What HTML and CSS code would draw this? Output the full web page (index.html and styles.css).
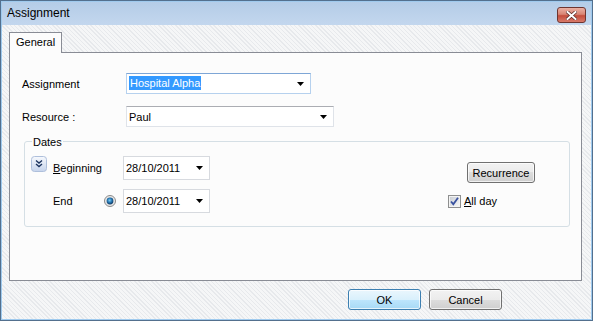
FILE: index.html
```html
<!DOCTYPE html>
<html lang="en">
<head>
<meta charset="UTF-8">
<title>Assignment</title>
<link rel="stylesheet" href="styles.css">
</head>
<body>
  <div class="window">
    <div class="frame">
      <div class="titlebar">
        <span class="title">Assignment</span>
        <span class="close">
          <svg width="11" height="9" viewBox="0 0 11 9">
            <path d="M1.5 1 L9.5 8 M9.5 1 L1.5 8" stroke="#5a2a26" stroke-width="3.4" stroke-linecap="square"/>
            <path d="M1.5 1 L9.5 8 M9.5 1 L1.5 8" stroke="#fff" stroke-width="2" stroke-linecap="square"/>
          </svg>
        </span>
      </div>

      <div class="client">
        <div class="tabs">
          <div class="tab">General</div>
        </div>

        <div class="panel">
          <div class="field-row">
            <span class="label">Assignment</span>
            <div class="combo combo-assign focus">
              <span class="value"><span class="sel">Hospital Alpha</span></span>
              <svg class="arrow" width="7" height="4" viewBox="0 0 7 4"><polygon points="0,0 7,0 3.5,4" fill="#000"/></svg>
            </div>
          </div>
          <div class="field-row">
            <span class="label">Resource :</span>
            <div class="combo combo-resource">
              <span class="value">Paul</span>
              <svg class="arrow" width="7" height="4" viewBox="0 0 7 4"><polygon points="0,0 7,0 3.5,4" fill="#000"/></svg>
            </div>
          </div>

          <div class="group">
            <span class="group-title">Dates</span>
            <div class="group-grid">
              <span class="expand">
                <svg width="16" height="16" viewBox="0 0 16 16">
                  <defs>
                    <linearGradient id="eg" x1="0" y1="0" x2="0" y2="1">
                      <stop offset="0" stop-color="#f7f9fd"/>
                      <stop offset="1" stop-color="#c6d4ec"/>
                    </linearGradient>
                  </defs>
                  <rect x="0.5" y="0.5" width="15" height="15" rx="3" fill="url(#eg)" stroke="#aebfdb"/>
                  <path d="M5 4.5 L8 7 L11 4.5 M5 8 L8 10.5 L11 8" fill="none" stroke="#1d3560" stroke-width="1.4"/>
                </svg>
              </span>
              <span class="glabel row1"><u>B</u>eginning</span>
              <div class="combo date row1">
                <span class="value">28/10/2011</span>
                <svg class="arrow" width="7" height="4" viewBox="0 0 7 4"><polygon points="0,0 7,0 3.5,4" fill="#000"/></svg>
              </div>
              <button class="btn recurrence">Recurrence</button>

              <span class="glabel row2">End</span>
              <span class="radio">
                <svg width="12" height="12" viewBox="0 0 12 12">
                  <defs>
                    <radialGradient id="rg" cx="0.45" cy="0.4" r="0.6">
                      <stop offset="0" stop-color="#7fd0f5"/>
                      <stop offset="0.5" stop-color="#2a7bb6"/>
                      <stop offset="1" stop-color="#0e3660"/>
                    </radialGradient>
                  </defs>
                  <circle cx="6" cy="6" r="5.5" fill="#e8e8e8" stroke="#8a8a8a"/>
                  <circle cx="6" cy="6" r="3.4" fill="url(#rg)"/>
                </svg>
              </span>
              <div class="combo date row2">
                <span class="value">28/10/2011</span>
                <svg class="arrow" width="7" height="4" viewBox="0 0 7 4"><polygon points="0,0 7,0 3.5,4" fill="#000"/></svg>
              </div>
              <label class="allday">
                <svg width="13" height="13" viewBox="0 0 13 13">
                  <defs>
                    <linearGradient id="cg" x1="0" y1="0" x2="1" y2="1">
                      <stop offset="0" stop-color="#cbcfd5"/>
                      <stop offset="1" stop-color="#f6f6f6"/>
                    </linearGradient>
                  </defs>
                  <rect x="0.5" y="0.5" width="12" height="12" fill="#f4f4f4" stroke="#8e8f8f"/>
                  <rect x="2" y="2" width="9" height="9" fill="url(#cg)"/>
                  <path d="M3 6.5 L5.3 9.2 L10 2.8" fill="none" stroke="#3a52a0" stroke-width="1.8"/>
                </svg>
                <span><u>A</u>ll day</span>
              </label>
            </div>
          </div>
        </div>

        <div class="buttons">
          <button class="btn default">OK</button>
          <button class="btn">Cancel</button>
        </div>
      </div>
    </div>
  </div>
</body>
</html>
```

FILE: styles.css
```css
* {
  box-sizing: border-box;
}

body {
  margin: 0;
  font-family: "Liberation Sans", Arial, sans-serif;
  font-size: 11px;
  color: #000;
}

.window {
  width: 593px;
  height: 321px;
  border: 1px solid #53708e;
}

.frame {
  height: 100%;
  border: 1px solid #9fcaee;
  display: flex;
  flex-direction: column;
  background: repeating-linear-gradient(45deg, #e7e9ec 0 1px, #f5f6f7 1px 3px);
}

/* title bar */
.titlebar {
  height: 23px;
  display: flex;
  background: linear-gradient(#b4cce7, #c3d7ee);
}

.title {
  font-size: 12px;
  line-height: 23px;
  padding-left: 5px;
}

.close {
  margin: 5px 5px 0 auto;
  width: 29px;
  height: 16px;
  border: 1px solid #6e3530;
  border-radius: 3px;
  display: flex;
  align-items: center;
  justify-content: center;
  background: linear-gradient(#eab0a3 0%, #d98574 45%, #c44d3c 55%, #d87a6a 100%);
}

/* client area */
.client {
  flex: 1;
  padding: 7px 9px 0 7px;
}

.tabs {
  display: flex;
}

.tab {
  position: relative;
  z-index: 1;
  height: 21px;
  margin-bottom: -1px;
  padding: 0 6px;
  line-height: 19px;
  border: 1px solid #898c95;
  border-bottom: none;
  background: #fcfcfc;
}

.panel {
  height: 229px;
  border: 1px solid #898c95;
  background: #fcfcfc;
  padding: 20px 11px 0 12px;
}

.field-row {
  display: flex;
  align-items: center;
  height: 21px;
}

.field-row + .field-row {
  margin-top: 12px;
}

.label {
  width: 104px;
}

.combo {
  height: 21px;
  display: flex;
  align-items: center;
  padding: 0 6px 0 2px;
  background: #fff;
  border: 1px solid #dfe3e9;
  border-top-color: #abadb3;
}

.combo.focus {
  border-color: #b6d1ee;
  border-top-color: #7ea6d6;
}

.combo .value {
  flex: 1;
  white-space: nowrap;
}

.combo-assign {
  width: 185px;
}

.combo-resource {
  width: 208px;
}

.sel {
  background: #3399ff;
  color: #fff;
  padding: 1px 1px;
  line-height: 13px;
}

/* dates group */
.group {
  width: 546px;
  margin: 14px 0 0 2px;
  padding-bottom: 13px;
  border: 1px solid #d5dfe5;
  border-radius: 3px;
}

.group-title {
  display: table;
  margin: -6px 0 0 7px;
  padding: 0 1px;
  line-height: 13px;
  background: #fcfcfc;
}

.group-grid {
  display: grid;
  grid-template-columns: 28px 51px 19px 87px 1fr;
  grid-template-rows: 24px 24px;
  row-gap: 9px;
  margin-top: 7px;
}

.expand {
  grid-column: 1;
  grid-row: 1;
  margin-left: 6px;
  width: 16px;
  height: 16px;
  display: flex;
}

.glabel {
  grid-column: 2;
  align-self: center;
}

.row1 {
  grid-row: 1;
}

.row2 {
  grid-row: 2;
}

.radio {
  grid-column: 3;
  grid-row: 2;
  align-self: center;
  display: flex;
}

.date {
  grid-column: 4;
  height: 24px;
  width: 87px;
  border-color: #d7dadf;
}

.allday {
  grid-column: 5;
  grid-row: 2;
  align-self: center;
  justify-self: start;
  margin-left: 238px;
  display: flex;
  align-items: center;
  gap: 3px;
}

.allday svg {
  display: block;
}

/* buttons */
.buttons {
  display: flex;
  justify-content: flex-end;
  gap: 8px;
  margin-top: 8px;
  padding-right: 80px;
}

.btn {
  width: 73px;
  height: 21px;
  padding: 0;
  font: inherit;
  color: #000;
  border: 1px solid #707070;
  border-radius: 3px;
  background: linear-gradient(#f2f2f2 0%, #ebebeb 50%, #dddddd 50%, #cfcfcf 100%);
  box-shadow: inset 0 0 0 1px rgba(255, 255, 255, 0.7);
}

.btn.default {
  border-color: #3c7fb1;
  background: linear-gradient(#eaf6fd 0%, #d9f0fc 50%, #bee6fd 50%, #a7d9f5 100%);
}

.btn.recurrence {
  grid-column: 5;
  grid-row: 1;
  align-self: start;
  justify-self: start;
  margin: 6px 0 0 257px;
  width: 68px;
}
```
